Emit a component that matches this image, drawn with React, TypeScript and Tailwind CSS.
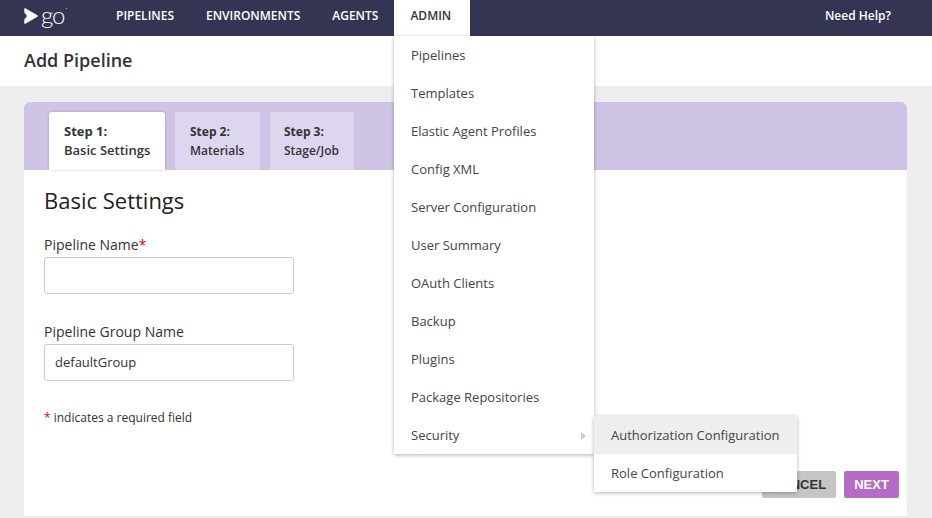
import React from "react";

const menu = ["Pipelines","Templates","Elastic Agent Profiles","Config XML","Server Configuration","User Summary","OAuth Clients","Backup","Plugins","Package Repositories"];

function Tab({ step, name, active, className }: { step: string; name: string; active?: boolean; className: string }) {
  return (
    <div className={`h-[58px] rounded-t-[3px] pt-[10px] font-semibold text-[#333] ${active ? "bg-white shadow-[0_0_3px_rgba(0,0,0,0.2)] text-[13px] leading-[19px]" : "bg-[#ded6ef] text-[12px] leading-[19px]"} ${className}`}>
      <div className="font-bold">{step}</div>
      <div>{name}</div>
    </div>
  );
}

export default function App() {
  return (
    <div className="relative h-[518px] w-[932px] overflow-hidden bg-[#eeeeee] font-['Open_Sans',sans-serif] text-[#333]">
      <header className="flex h-9 items-center bg-[#333552] text-[12px] font-semibold text-white">
        <div className="flex w-[116px] items-center pl-6 pb-[6px]">
          <svg width="14" height="16" viewBox="0 0 14 16" className="mt-[1px]">
            <path d="M1 1 L13 8 L1 15 L1 12 L4 8 L1 4 Z" fill="#fff" stroke="#fff" strokeWidth="1.5" strokeLinejoin="round" />
          </svg>
          <span className="ml-[3px] mt-[-1px] text-[24px] leading-[20px] font-['Lato',sans-serif] font-light tracking-[-1px]">go</span>
          <span className="mb-[14px] ml-[1px] h-[1px] w-[1px] bg-white/60" />
        </div>
        <nav className="flex items-center pb-[4px]">
          <a className="mr-8">PIPELINES</a>
          <a className="mr-8">ENVIRONMENTS</a>
          <a className="mr-4">AGENTS</a>
        </nav>
        <a className="flex h-9 w-[76px] items-center bg-white pb-[4px] pl-4 text-[#333]">ADMIN</a>
        <a className="ml-auto mr-[41px] pb-[4px]">Need Help?</a>
      </header>

      <div className="flex h-[50px] items-center bg-white pb-[2px] pl-6">
        <h1 className="text-[18px] font-semibold text-[#333]">Add Pipeline</h1>
      </div>

      <main className="ml-6 mr-[25px] mt-4 flex h-[414px] flex-col rounded-t-[6px] bg-white">
        <div className="flex h-[68px] items-end rounded-t-[6px] bg-[#cfc3e6] pl-[25px]">
          <Tab step="Step 1:" name="Basic Settings" active className="w-[116px] pl-[15px]" />
          <Tab step="Step 2:" name="Materials" className="ml-[10px] w-[85px] pl-[15px]" />
          <Tab step="Step 3:" name="Stage/Job" className="ml-[10px] w-[84px] pl-[14px]" />
        </div>
        <section className="flex flex-1 flex-col px-5 pt-[14px]">
          <h2 className="text-[22px] leading-[32px] text-[#222]">Basic Settings</h2>
          <label className="mt-[19px] text-[14px] leading-[20px]">Pipeline Name<span className="text-[#e00]">*</span></label>
          <input className="mt-[2px] h-[37px] w-[250px] rounded-[3px] border border-[#ccc] bg-white px-[10px] text-[13px]" />
          <label className="mt-[28px] text-[14px] leading-[20px]">Pipeline Group Name</label>
          <input defaultValue="defaultGroup" className="mt-[2px] h-[37px] w-[250px] rounded-[3px] border border-[#ccc] bg-white px-[10px] pb-[2px] text-[13px] text-[#333]" />
          <p className="mt-[28px] text-[12px] leading-[18px]"><span className="text-[#e00]">*</span> indicates a required field</p>
          <div className="mt-auto mb-[18px] mr-[-12px] flex justify-end gap-2 font-['Liberation_Sans',sans-serif] text-[13px] font-bold">
            <button className="h-[27px] w-[74px] rounded-[2px] bg-[#c5c5c5] text-[#333]">CANCEL</button>
            <button className="h-[27px] w-[55px] rounded-[2px] bg-[#b56cc4] text-white">NEXT</button>
          </div>
        </section>
      </main>

      <div className="absolute left-[394px] top-9 w-[200px] bg-white text-[13px] text-[#444] shadow-[0_1px_4px_rgba(0,0,0,0.3)]">
        {menu.map((m) => (
          <div key={m} className="flex h-[38px] items-center pl-[17px] pt-[2px]">{m}</div>
        ))}
        <div className="flex h-[38px] items-center justify-between pl-[17px] pr-[8px] pt-[2px]">
          Security
          <span className="h-0 w-0 border-y-[4px] border-l-[5px] border-y-transparent border-l-[#ccc]" />
        </div>
      </div>
      <div className="absolute left-[594px] top-[416px] w-[203px] bg-white text-[13px] text-[#444] shadow-[0_1px_4px_rgba(0,0,0,0.3)]">
        <div className="flex h-[38px] items-center bg-[#eeeeee] pl-[17px] pt-[2px]">Authorization Configuration</div>
        <div className="flex h-[38px] items-center pl-[17px] pt-[2px]">Role Configuration</div>
      </div>
    </div>
  );
}
